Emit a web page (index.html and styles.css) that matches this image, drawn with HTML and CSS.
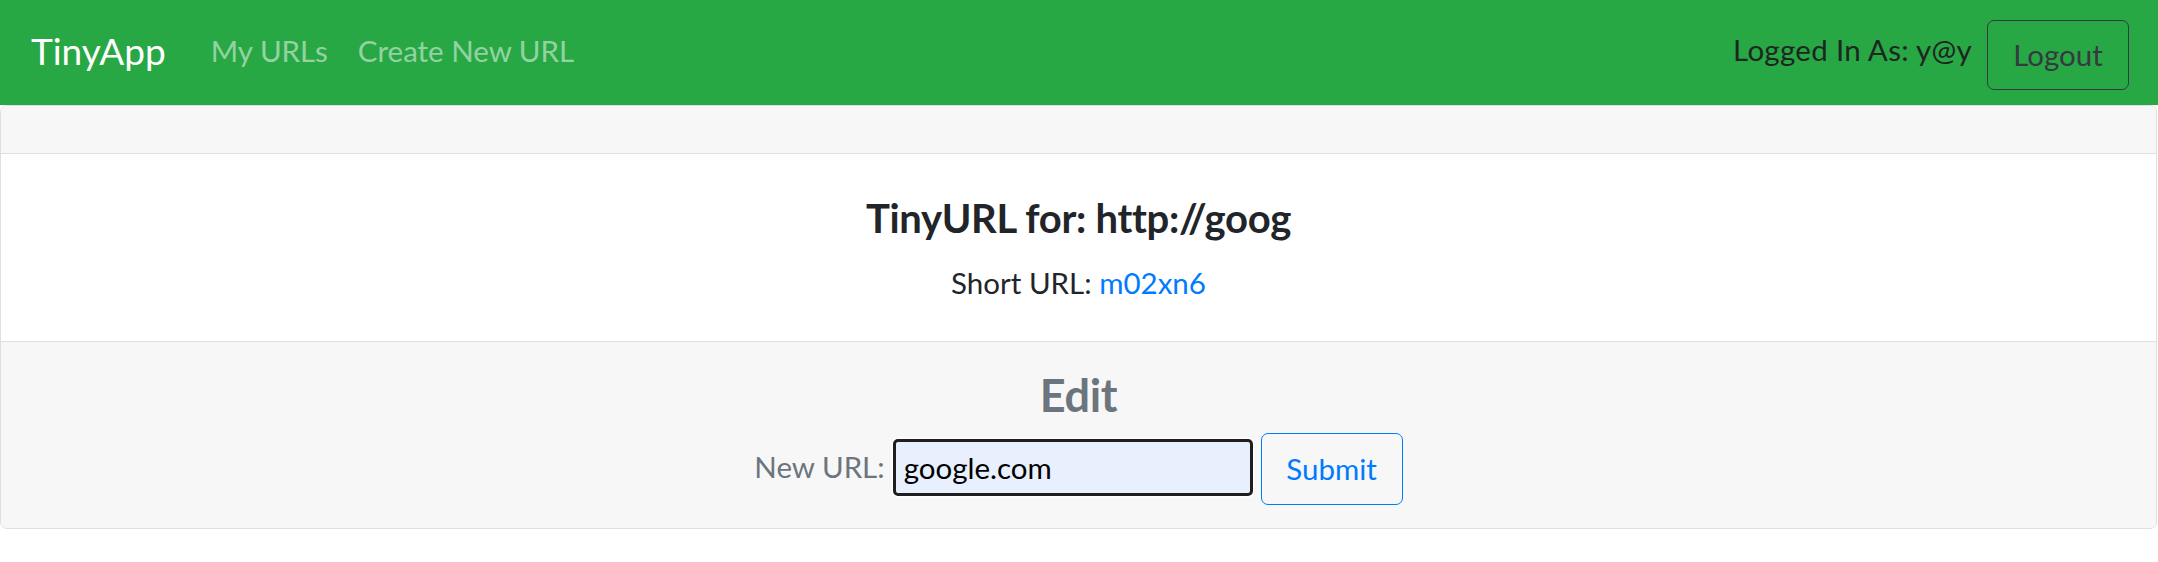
FILE: index.html
```html
<!DOCTYPE html>
<html lang="en">
<head>
<meta charset="utf-8">
<title>TinyApp</title>
<link rel="stylesheet" href="styles.css">
</head>
<body>
<nav class="navbar">
  <a class="brand" href="#">TinyApp</a>
  <div class="nav-links">
    <a class="nav-link" href="#">My URLs</a>
    <a class="nav-link" href="#">Create New URL</a>
  </div>
  <div class="nav-right">
    <span class="user">Logged In As: y@y</span>
    <button class="btn btn-logout" type="button">Logout</button>
  </div>
</nav>
<main class="card">
  <div class="card-header"></div>
  <div class="card-body">
    <h4 class="title">TinyURL for: http://goog</h4>
    <p class="card-text">Short URL: <a class="short" href="#">m02xn6</a></p>
  </div>
  <div class="card-footer">
    <h3 class="edit-title">Edit</h3>
    <form class="edit-form">
      <label class="edit-label" for="newurl">New URL:</label>
      <input class="url-input" id="newurl" type="text" value="google.com">
      <button class="btn btn-submit" type="button">Submit</button>
    </form>
  </div>
</main>
</body>
</html>
```
FILE: styles.css
```css
* { box-sizing: border-box; }
body {
  margin: 0;
  font-family: Lato, "Liberation Sans", sans-serif;
  font-size: 29.5px;
  color: #212529;
  background: #fff;
}
a { text-decoration: none; }

.navbar {
  display: flex;
  align-items: center;
  height: 105px;
  padding: 4px 29px 0 31px;
  background: #28a745;
}
.brand {
  font-size: 37px;
  line-height: 56px;
  color: #fff;
  margin-right: 30px;
  margin-bottom: 7px;
}
.nav-links {
  display: flex;
  margin-bottom: 8px;
}
.nav-link {
  padding: 0 15px;
  line-height: 45px;
  color: rgba(255, 255, 255, 0.5);
}
.nav-right {
  margin-left: auto;
  display: flex;
  align-items: center;
}
.user {
  color: #1d2620;
  line-height: 45px;
  margin-bottom: 10px;
  letter-spacing: 0.3px;
}
.btn {
  font-family: inherit;
  font-size: 29.5px;
  background: transparent;
  border: 1px solid;
  border-radius: 7px;
  cursor: pointer;
}
.btn-logout {
  margin-left: 15px;
  width: 142px;
  height: 70px;
  color: #343a40;
  border-color: #343a40;
}

.card {
  display: block;
  border: 1px solid #dfdfdf;
  border-radius: 7px;
  overflow: hidden;
  margin: 0 1px 0 0;
}
.card-header {
  height: 48px;
  background: #f7f7f7;
  border-bottom: 1px solid #dfdfdf;
}
.card-body {
  padding: 37px 0 36px;
  text-align: center;
  background: #fff;
}
.title {
  margin: 0 0 15px;
  font-size: 40px;
  font-weight: 700;
  line-height: 54px;
  letter-spacing: -0.3px;
  color: #212529;
}
.card-text {
  margin: 0;
  line-height: 45px;
}
.short { color: #007bff; }

.card-footer {
  background: #f7f7f7;
  border-top: 1px solid #dfdfdf;
  padding: 22px 0 24px;
  text-align: center;
}
.edit-title {
  margin: 0 0 6px;
  font-size: 45px;
  font-weight: 700;
  line-height: 63px;
  letter-spacing: -0.3px;
  color: #6c757d;
}
.edit-form {
  display: flex;
  justify-content: center;
  align-items: center;
  height: 71px;
}
.edit-label {
  color: #6c757d;
  margin-right: 8px;
  margin-bottom: 4px;
}
.url-input {
  width: 360px;
  height: 57px;
  margin-bottom: 3px;
  padding: 0 0 0 8px;
  font-family: inherit;
  font-size: 29.5px;
  color: #000;
  background: #e8f0fe;
  border: 3px solid #1f1f1f;
  border-radius: 5px;
  box-shadow: 0 0 0 1.5px #fff;
  outline: none;
}
.btn-submit {
  margin-left: 8px;
  width: 142px;
  height: 72px;
  color: #007bff;
  border-color: #007bff;
}
```
